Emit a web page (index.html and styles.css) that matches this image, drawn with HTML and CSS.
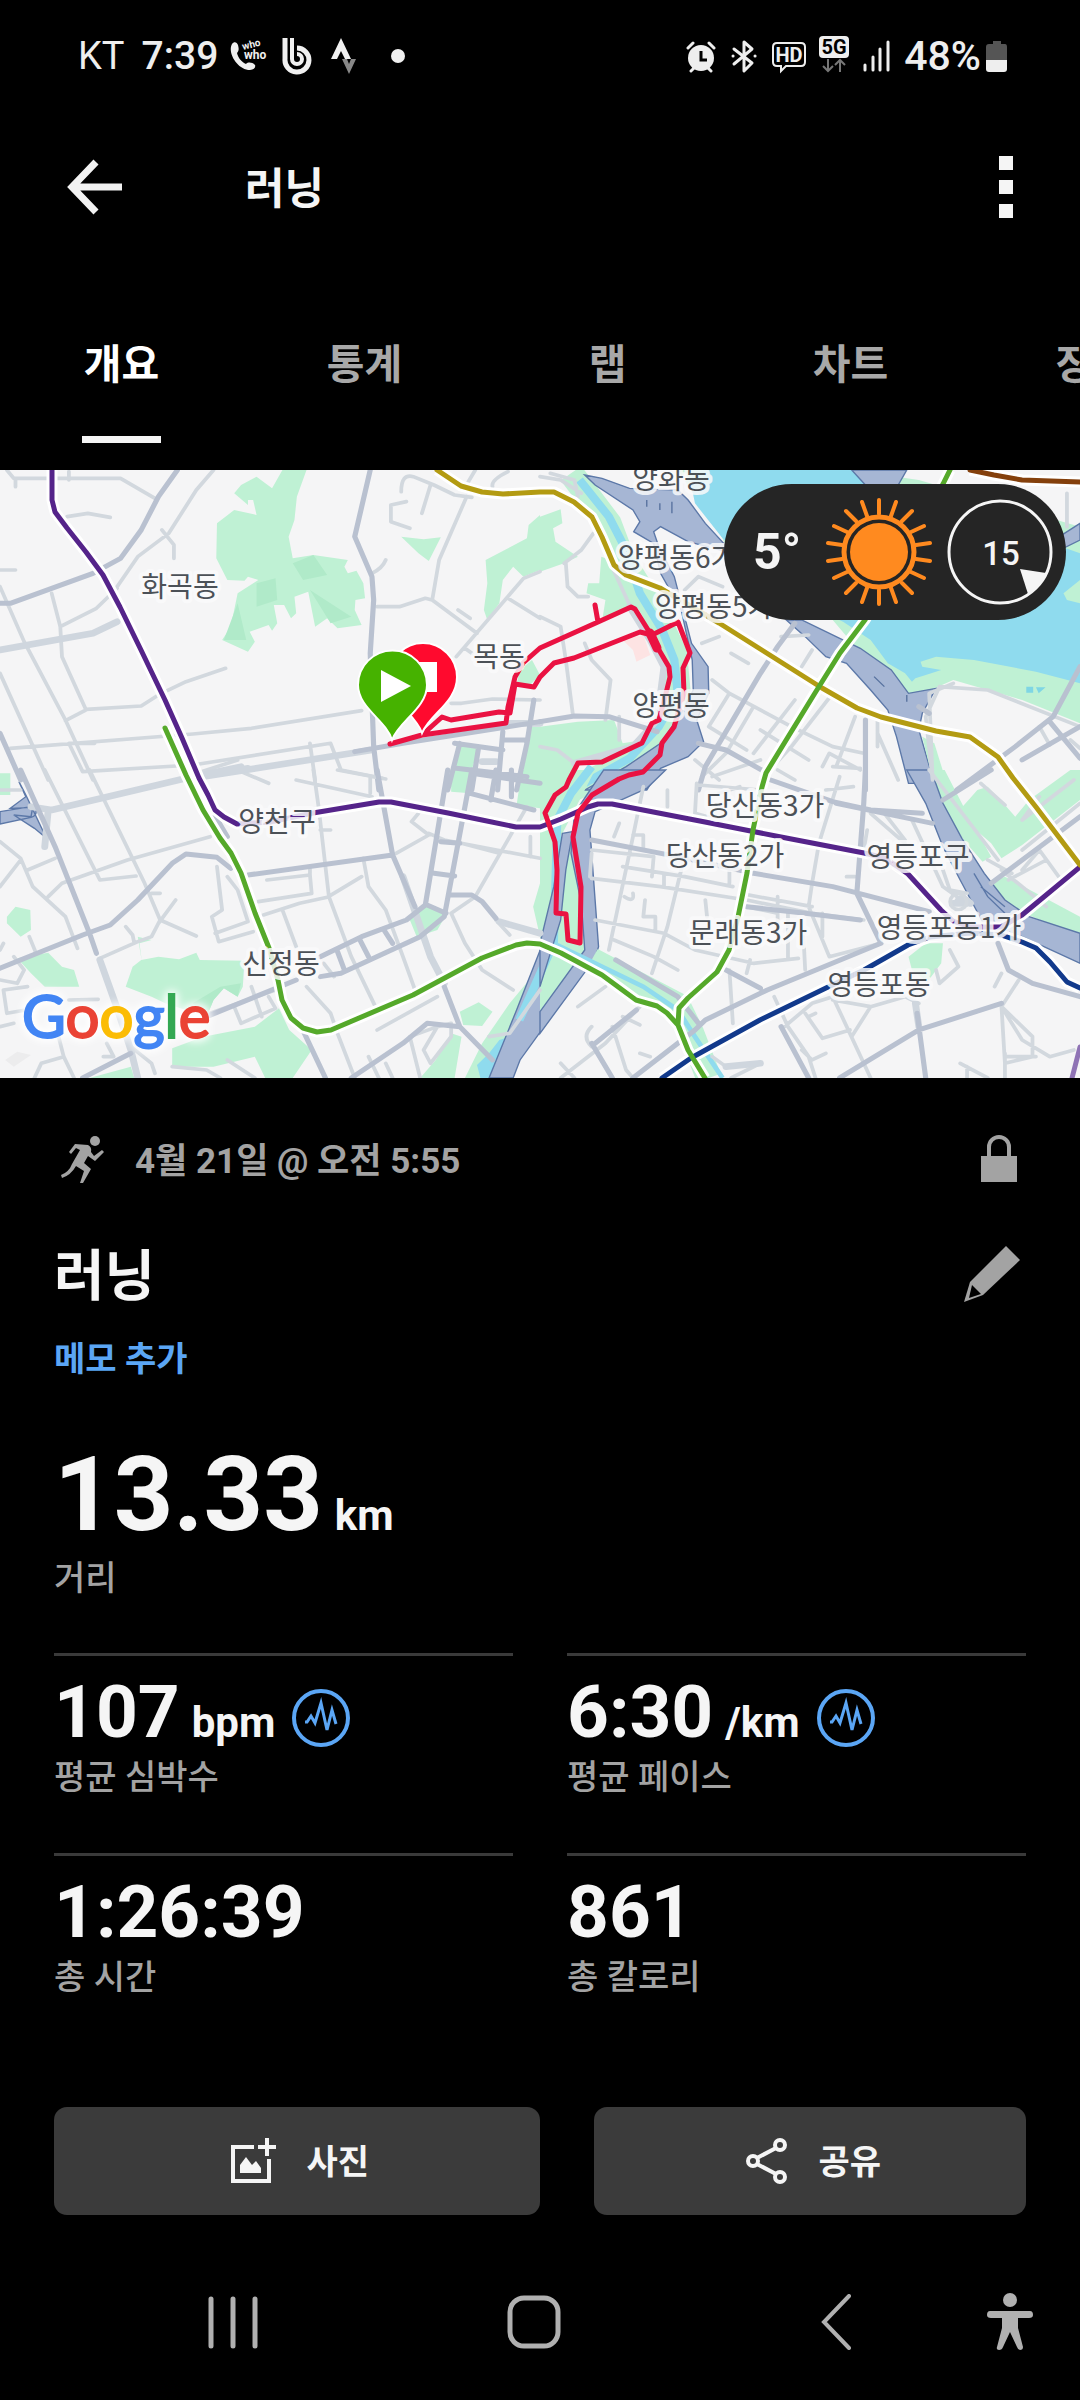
FILE: index.html
```html
<!DOCTYPE html>
<html lang="ko">
<head>
<meta charset="utf-8">
<meta name="viewport" content="width=device-width, initial-scale=1">
<title>러닝</title>
<link rel="stylesheet" href="styles.css">
</head>
<body>
<div class="status">
  <div class="status-group">
    <span class="carrier">KT</span>
    <span class="clock">7:39</span>
    <svg width="40" height="40" viewBox="0 0 40 40" fill="#f0f0f0"><path d="M2 8c2-3 5-2 6 1 1 4 1 6-1 8 1 5 5 9 9 11 2-2 6-2 9 1 1 2-1 5-5 5C8 34-3 17 2 8z"/><text x="13" y="14" font-size="10" class="tiny" transform="rotate(-14 13 14)">who</text><text x="14" y="23" font-size="12" class="tiny">who</text></svg>
    <svg width="30" height="40" viewBox="0 0 30 40" fill="none" stroke="#f0f0f0" stroke-width="5"><path d="M3 2v21a12 12 0 1 0 12-11"/><path d="M10 2v21a5 5 0 1 0 5-5" stroke-width="4"/></svg>
    <svg width="40" height="40" viewBox="0 0 40 40"><path d="M17 2 27 23h-6l-4-8-4 8H7z" fill="#f0f0f0"/><path d="M18 23h5l2 5 2-5h5l-7 15z" fill="#888"/></svg>
    <svg width="40" height="40" viewBox="0 0 40 40"><circle cx="22" cy="20" r="7" fill="#f0f0f0"/></svg>
  </div>
  <div class="status-group">
    <svg width="30" height="36" viewBox="0 0 30 36"><circle cx="15" cy="20" r="13" fill="#eee"/><path d="M2 10 7 5M28 10l-5-5M5 33l4-4M25 33l-4-4" stroke="#eee" stroke-width="3" stroke-linecap="round"/><path d="M15 13v9h6" fill="none" stroke="#000" stroke-width="3"/></svg>
    <svg width="32" height="36" viewBox="0 0 32 36" fill="none" stroke="#eee" stroke-width="3" stroke-linecap="round" stroke-linejoin="round"><path d="M6 11 24 25l-8 8V4l8 7L6 26M5 18h.1M27 18h.1"/></svg>
    <svg width="34" height="36" viewBox="0 0 34 36"><path d="M5 5h24q4 0 4 4v15q0 4-4 4H14l-5 5v-5H5q-4 0-4-4V9q0-4 4-4z" fill="none" stroke="#eee" stroke-width="2"/><text x="17" y="24" text-anchor="middle" font-size="20" class="tiny" fill="#eee">HD</text></svg>
    <svg width="32" height="40" viewBox="0 0 32 40"><rect x="1" y="0" width="30" height="22" rx="4" fill="#eee"/><text x="16" y="18" text-anchor="middle" font-size="20" class="tiny" fill="#000">5G</text><path d="M10 23v12m-5-5 5 5 5-5M22 36V24m-5 5 5-5 5 5" fill="none" stroke="#777" stroke-width="2"/></svg>
    <svg width="30" height="36" viewBox="0 0 30 36" stroke="#eee" stroke-width="3" stroke-linecap="round"><path d="M3 27v5M11 19v13M18 11v21M26 4v28"/></svg>
    <span class="battery"><span>48%</span>
    <svg width="22" height="32" viewBox="0 0 22 32"><path d="M7 1h8v3h4q2 0 2 3v13H0V7q0-3 3-3h4z" fill="#555"/><path d="M0 20h21v9q0 3-3 3H3q-3 0-3-3z" fill="#eee"/></svg></span>
  </div>
</div>

<header class="bar">
  <button class="icon-btn" aria-label="뒤로"><svg width="56" height="56" viewBox="0 0 56 56" fill="none" stroke="#f2f2f2" stroke-width="7"><path d="M29 3 5 28l24 25M5 28h50"/></svg></button>
  <h1 class="bar-title">러닝</h1>
  <button class="icon-btn" aria-label="더보기"><svg width="14" height="62" viewBox="0 0 14 62" fill="#f5f5f5"><path d="M0 0h14v14H0zM0 24h14v14H0zM0 48h14v14H0z"/></svg></button>
</header>

<nav class="tabs">
  <a class="tab is-active" href="#overview"><span>개요</span></a>
  <a class="tab" href="#stats"><span>통계</span></a>
  <a class="tab" href="#laps"><span>랩</span></a>
  <a class="tab" href="#charts"><span>차트</span></a>
  <a class="tab" href="#gear"><span>장비</span></a>
</nav>

<main>
<section class="map">
<svg class="map-art" viewBox="0 0 1080 608">
  <rect width="1080" height="608" fill="#f5f5f6"/>
  <!-- land and water, one group per map tile, each with the tile's own grid -->
  <g transform="translate(0 -10) scale(.3444 .3333)">
    <path class="park" d="M820 30 790 85 745 50 700 75 680 100 720 135 720 120 735 120 745 165 680 150 630 190 628 295 660 360 710 362 720 350 750 360 690 400 670 500 645 540 720 575 740 545 725 515 780 495 790 512 805 490 795 435 825 435 845 475 860 460 855 410 895 395 915 500 950 475 980 505 1050 495 1030 450 1032 420 1060 415 1055 370 1035 332 1010 340 1000 320 1010 300 910 285 850 295 838 230 855 180 862 110 890 30z"/>
    <path class="park" d="M1165 230 1230 238 1280 232 1245 303 1215 280z"/>
    <path class="park" d="M1568 165 1535 195 1530 235 1410 300 1415 370 1405 450 1415 480 1450 430 1460 360 1490 320 1520 350 1568 330z"/>
    <path class="park" d="M1325 850 1390 860 1370 930 1325 925zM1320 935 1370 945 1365 990 1310 980zM1535 800H1568V1000H1512z"/>
    <path class="park-dark" d="M745 370 800 355 805 420 745 440zM850 310 910 285 950 345 880 360zM690 430 715 540 650 540zM900 390 1020 470 960 490z"/>
  </g>
  <g transform="translate(540 -10) scale(.3444 .3333)">
    <path class="park" d="M400 30 900 30 1100 60 1568 200V790L1400 720 1200 660 1080 715 1010 690 940 590 850 480 600 400 530 235z"/>
    <path class="water" d="M430 30H905L1100 110 1568 280V670L1440 635 1260 600 1150 590 1105 605 1110 620 1165 630 1120 645 1090 655 1080 665 1060 640 1010 610 960 540 880 485 700 400 530 235 450 130z"/>
    <path class="park" d="M1520 400 1568 360V430L1530 420zM0 170 60 148 65 190 38 205 45 245 110 290 70 310 0 335zM178 290 205 300 235 360 330 450 250 440 180 485 190 420 135 400 140 370 172 370zM0 800 110 785 215 780 240 850 300 840 280 870 180 905 110 910 80 960 20 960 0 930z"/>
    <path class="bank" d="M90 40 200 190 240 300 330 450 390 580 400 690 370 790 280 900 90 990"/>
    <path class="brook" d="M115 60 200 170 245 260 290 400 355 510 390 600 400 700 345 800 260 895 130 970"/>
    <path class="freeway" d="M130 45 180 55 260 85 400 90 430 120 480 190 560 280 430 245 350 200 330 215 345 260 390 350 440 550 488 620 490 700 455 780 475 845 430 890 350 925 310 990H130L250 920 350 850 410 760 445 690 442 600 410 450 350 340 330 250 272 215 290 185 270 150 160 75z"/>
    <path class="freeway" d="M715 480 760 480 930 565 1020 630 1070 700 1150 685 1110 760 1100 810 1145 970H1070L1035 830 1010 750 960 690 890 610 830 590 770 530zM905 30H1065L1040 75H945zM1500 235 1568 190V240L1490 280z"/>
    <path d="M240 540 300 525 320 585 280 605 270 570z" fill="#fde3e3"/>
    <path class="park" d="M1110 830 1145 850 1190 1000H1150z"/>
    <path d="M310 120v20M348 130v20M383 125v35M970 650l30 30M1065 705v20" stroke="#58729f" stroke-width="4"/>
    <path d="M1412 680h20v18h-20zM1440 682h28l-20 18z" fill="#7fd6e4"/>
  </g>
  <g transform="translate(0 300) scale(.3444 .3333)">
    <path class="park" d="M0 10H30V75H0zM20 440 45 410 88 420 90 480 60 500 20 460zM50 565 140 548 180 590 215 600 230 650 130 650 90 610zM410 570 460 560 520 568 570 548 580 570 710 572 705 650 690 680 650 655 620 690 600 740 540 720 480 700 440 680 365 650 385 590zM400 500 440 510 405 520 412 575zM500 835 590 800 740 770 810 715 840 780 905 840 850 924H770L740 860 620 890 500 890zM1190 450 1240 405 1295 435 1270 480 1210 500zM1335 725 1390 697 1430 725 1400 768 1345 765zM1568 590 1480 700 1400 820 1350 924H1440L1568 620zM1310 790 1340 800 1320 924H1220L1265 870zM260 924 380 890 390 924zM1568 340 1548 410 1568 500zM1310 0H1375L1365 70 1310 65zM1515 0H1568V115L1500 105z"/>
    <path class="water" d="M1450 810 1420 850 1385 885 1395 924H1430L1480 800z"/>
    <path class="freeway" d="M1580 510 1500 720 1420 924H1490L1510 870 1580 770zM0 125 90 110Q105 112 105 125T90 142L0 162zM55 35 75 75 135 205 100 175 40 135 90 140 95 112 30 115 75 80z"/>
    <path class="park-dark" d="M560 700 640 650 700 640 690 680 650 655 620 690 600 740z"/>
    <path d="M15 870 50 845 90 855 40 890z" fill="#ececed"/>
  </g>
  <g transform="translate(540 300) scale(.3444 .3333)">
    <path class="park" d="M0 0H160L60 200 140 230 150 560 0 760z"/>
    <path class="brook" d="M150 -10 90 70 50 150 40 520 -60 750"/>
    <path class="freeway" d="M185 0H365L310 55 160 125 145 180 170 530 160 565 0 790V725L130 540 120 400 90 250 100 130zM65 190 95 185 75 300 60 450 0 650V520L40 350z"/>
    <path class="bank" d="M150 570 280 640 400 705 440 790 490 924"/>
    <path class="brook narrow" d="M50 525 160 580 300 650 400 720 450 800 530 924"/>
    <path class="park" d="M1140 0 1175 0 1230 110 1310 260 1285 275 1230 210 1160 90zM1270 60 1300 50 1350 105 1380 140 1420 90 1540 0H1568V90L1400 225 1340 265 1310 220 1210 130zM1310 335 1350 320 1568 440V500L1430 440 1360 410zM1070 560 1120 520 1170 520 1165 580 1125 635 1080 600z"/>
    <path class="freeway" d="M1065 0H1135L1170 100 1225 205 1290 310 1350 390 1420 440 1568 490V580L1400 500 1290 465 1220 330 1170 230 1120 100z"/>
    <path d="M1260 310 1300 380 1350 430M1280 350 1350 410" class="edge"/>
  </g>

  <!-- streets, on the same tile grids -->
  <g transform="translate(0 -10) scale(.3444 .3333)">
    <path class="road" d="M20 30 40 55H350L450 115M45 55V80M200 35V60M195 170 255 160 320 172M620 30 570 90 490 220 400 290 340 380M470 210 505 255V295M0 330H45M0 380 70 545 190 780 270 960M150 400 175 500 180 590 250 750 190 782M175 500 280 445 340 385M250 748 410 738 460 705 540 665 655 625M0 640 140 960M30 865 560 822 730 805 1050 752M200 850 240 935 560 915 960 850 990 930 1110 955M200 850 275 850M900 850 915 960M1080 340Q1110 325 1120 300M1095 440 1160 440 1235 415 1255 420 1385 520M1255 420 1275 300 1355 110M1165 95Q1165 40 1200 50L1260 75 1320 105 1370 112M1250 75 1225 160M1180 125 1135 135V185L1190 205M1430 80Q1425 60 1475 35M1330 450 1365 475M1325 590 1520 355 1568 335M1475 415 1568 475M1310 730H1340L1430 717 1568 720M1350 565 1370 580M1380 30 1360 65M560 940 700 935 780 970"/>
    <path class="road wide" d="M0 570 270 520 340 485M560 955 1080 870M1400 905H1440M1470 790H1568"/>
    <path class="road main" d="M0 430H30L270 340 350 295 410 210 460 110 515 30M1075 30 1030 230 1080 350 1085 420 1075 580 1085 860 1100 990M0 820 60 960M1030 875 1170 850 1568 785M1320 850 1460 870M1460 815 1445 990M1335 850 1300 990M1390 860 1370 990M1550 720 1530 850 1500 990M1460 840H1530M1325 925 1530 950"/>
  </g>
  <g transform="translate(540 -10) scale(.3444 .3333)">
    <path class="road" d="M0 50 60 60 120 100M0 470 60 500 75 600 95 760M130 550 150 600 205 660 190 780M75 310 80 380 110 410 140 410M155 220 120 270 70 310M200 300 260 435M500 660 550 700 730 800 850 860 940 880M550 700 490 800 600 870M620 740 540 880 470 950M740 720 620 880M850 700 730 860 640 960M915 770 860 920M820 920 840 880 930 930M980 780V860M980 820 1040 960M555 580 605 610M470 550 520 530M420 390 460 350 530 380M500 950 640 900M850 920 930 925M640 810 780 900M0 860 50 870 100 910M230 770V840M790 570 760 620M700 530 780 525M1140 960 1120 770 1160 680 1300 690 1568 800M1140 960 1130 700 1200 670M1450 800 1480 855M1540 840 1568 865M1530 100V200M30 40 100 60 110 110M450 900 520 960"/>
    <path class="road wide" d="M260 440 320 540 360 620 340 780 270 860 100 910"/>
    <path class="road main" d="M740 490 690 560 640 640 560 780 480 920 460 990M0 785 100 768 200 770 340 815M460 850 540 870 660 940M945 780V990M1568 620 1490 770 1380 860 1210 990M1480 785 1568 895M1568 800 1400 900M1100 740 1130 760"/>
  </g>
  <g transform="translate(0 300) scale(.3444 .3333)">
    <path class="road" d="M130 0 290 330 395 318M260 0 420 340 465 450 440 500 400 515 290 565M140 380 180 340 370 270 610 200M0 215 60 265 95 350 190 440 225 535M0 350 60 270M80 300 160 265M465 450 570 498M440 370 465 370M510 390 460 460M365 470 385 495 390 520M630 290 645 420 615 440 635 515 735 485M660 320 690 360 720 455 625 490M775 330 900 315 905 370 750 395M900 290V320M765 435 870 400 950 382 1050 320M910 0 925 110 955 380 1020 560 1090 710M930 180H960M1055 265 1070 350 1120 420 1170 560 1205 660M820 420 860 530M940 580 970 620M980 0 1120 27M1075 20V70M860 30 1080 80M1150 250 1245 195 1195 155 1215 130M1245 190 1290 210 1568 265M1310 430 1350 520 1400 600 1490 660M1310 430 1380 380 1430 290 1530 110M1440 450 1480 495M1340 220 1450 250M1540 200V260M0 630 50 640 70 600 40 560M10 660 20 730 75 720M10 660 80 650M200 690 285 688M0 770 40 760M170 800 185 860 120 880 100 924M185 860 215 924M310 820 330 860 300 860M380 830 440 880 450 910M610 730 800 660M680 710 700 760 800 715 780 680M730 650 760 740M890 650 960 730 980 790 1030 924M660 870 740 924M500 890 600 900 640 924M1070 860 1100 924M1120 880 1140 924M1095 780 1270 680M1220 924 1190 800 1270 770 1310 760 1310 800 1250 880 1230 840 1270 770M1568 660 1480 790 1420 800M0 540 10 520M85 500 105 550M540 20 690 -30M0 60 60 60"/>
    <path class="road wide" d="M90 110 150 120 540 25 700 -10M140 120 130 230M290 570 335 700 380 840 400 924M1170 320 1250 560 1290 640M1450 455 1568 490M720 -5 640 10"/>
    <path class="road main" d="M60 0 160 230 260 490 280 550M0 595 240 495 320 465 400 390 500 280 540 252 630 262 670 295M720 315 1140 255M1095 0 1140 255 1205 410M930 560 1050 500 1180 450 1235 405 1300 0M930 620 990 610 1220 500 1290 440 1370 0M1240 405 1295 430M1260 310 1320 318M1280 215 1335 220M1365 70 1550 120M1290 650 1335 770 1430 870M1335 770 1240 760 1170 820 1020 924M380 850 240 924M870 760 945 924M600 740 860 630M980 545 1000 600M1045 510 1070 560M1115 480 1140 520M1310 375H1370L1400 395 1440 445M1370 10 1568 40M1440 0 1425 90M1485 0V80M620 130 660 200"/>
  </g>
  <g transform="translate(540 300) scale(.3444 .3333)">
    <path class="road" d="M300 50 270 200 200 540M370 60V110M230 160 215 200M270 195H300V235M150 240 330 260 325 320M150 325 350 350 600 390 790 430 940 450M410 300 370 470 325 610M240 290 420 320 560 350M360 350V310M480 390 485 440M550 300V340M160 450 360 490 450 540 620 580 750 565M215 510 330 560 400 600M245 380Q275 400 270 370M305 390 300 440H335V480M455 40 450 130 520 150M460 45 640 60M870 20 810 220 790 340 780 410 840 560 990 520M690 380V500M600 410 690 430M580 370 790 410M720 430V560M765 500 770 600M820 430V500M950 180 940 240M890 320H915M610 570 600 610M110 710 190 650M60 924 190 820 290 710M150 830Q120 800 150 770M150 820 210 924M210 770 250 900 270 924M240 740 290 765M60 880 100 924M290 850 320 860M550 600 560 760M680 680 720 770 780 860 800 924M710 770 790 700 850 680 960 924M770 730 820 805 900 780M850 690 960 710 905 800M960 710 1060 680 1100 700M760 840 790 870 830 850M780 740 800 730M1130 0 1330 270M960 130 1060 220M1000 130 1060 210M1080 150 1170 350 1210 380M1170 300 1190 360 1240 370M1190 540 1215 590 1160 640 1150 600M1390 630 1340 710 1350 880 1430 860 1430 800 1340 710M1350 860H1440M1340 710 1400 810 1480 860 1550 840M1350 850V924M1320 650 1340 610M1220 880 1300 924M1240 890 1240 924M1340 300 1400 350 1470 410M1360 330 1470 270M1400 300 1450 240 1520 340M1450 80 1400 150M1568 100 1400 240M1550 30 1400 150M1350 105 1280 40M1300 270 1370 310M540 890 500 860M150 250 145 320M720 570V540M555 924 640 880M520 70 580 50M690 0 740 30M830 60 910 50"/>
    <path class="road wide" d="M540 890 640 880M1200 400H1240M1090 700 1100 770M1210 400Q1220 370 1250 400"/>
    <path class="road main" d="M150 210 400 260 620 310 850 350 1130 425M600 410 770 430 930 450M670 30 850 95 960 120 1110 130M945 0 940 100 920 370 990 520M990 520 660 660 480 750 450 780 270 924M540 600 640 655M700 770 780 924M870 924 1100 780 1340 700M1095 730 1120 924M1330 520 1360 600 1430 640 1568 680M1310 340 1568 140M1170 90 1310 0M150 820 210 924M160 820 280 720M220 570 400 680 460 760M860 100 1140 160"/>
    <circle cx="1215" cy="395" r="24" class="road"/>
  </g>

  <!-- subway lines: white casing, then colours -->
  <path class="rail" d="M52 0V30L55 42 67 58 86 82 103 105 120 137 141 180 165 230 182 268 199 308 208 325 215 340 224 347 237 354 270 352 313 343 379 332H391L448 343 482 350 516 357H540L561 349 588 337 598 334H612L705 352 781 367 864 383 885 388 908 404 941 440 953 451 970 457H1001L1022 445 1080 397M437 0 461 16 482 22 503 24 540 22H554L574 32 592 47 602 67 614 95 626 105 660 118 719 153 822 218 857 238 881 247 936 261 970 267 998 287 1013 308 1036 337 1080 395M165 258 186 305 203 340 220 368 231 383 241 403 255 443 269 478 278 510 282 530 291 548 303 558 317 562 331 560 413 525 482 488 516 475 527 473 540 474 561 483 602 505 636 530 657 536 667 543 678 555 688 580 705 608M950 0 943 14 865 150 840 183 815 223 788 267 766 303 762 317 753 360 747 403 738 447 729 480 717 502 688 528 679 538 678 555M970 0 994 5 1022 10 1080 12M662 608 691 588 760 550 826 518 864 500 908 475 930 467 970 463 1001 465 1022 472 1036 478 1050 492 1067 512 1080 518"/>
  <g class="lines">
    <path class="c5" d="M52 0V30L55 42 67 58 86 82 103 105 120 137 141 180 165 230 182 268 199 308 208 325 215 340 224 347 237 354 270 352 313 343 379 332H391L448 343 482 350 516 357H540L561 349 588 337 598 334H612L705 352 781 367 864 383 885 388 908 404 941 440 953 451 970 457H1001L1022 445 1080 397"/>
    <path class="c3" d="M437 0 461 16 482 22 503 24 540 22H554L574 32 592 47 602 67 614 95 626 105 660 118 719 153 822 218 857 238 881 247 936 261 970 267 998 287 1013 308 1036 337 1080 395"/>
    <path class="c1" d="M662 608 691 588 760 550 826 518 864 500 908 475 930 467 970 463 1001 465 1022 472 1036 478 1050 492 1067 512 1080 518"/>
    <path class="c2" d="M165 258 186 305 203 340 220 368 231 383 241 403 255 443 269 478 278 510 282 530 291 548 303 558 317 562 331 560 413 525 482 488 516 475 527 473 540 474 561 483 602 505 636 530 657 536 667 543 678 555 688 580 705 608M950 0 943 14 865 150 840 183 815 223 788 267 766 303 762 317 753 360 747 403 738 447 729 480 717 502 688 528 679 538 678 555"/>
    <path class="c4" d="M970 0 994 5 1022 10 1080 12"/>
    <path class="c6" d="M1080 577 1072 608"/>
  </g>

  <path class="park" d="M520 200 532 190 540 205 530 215 517 213z"/>
  <path class="route" d="M390 274 422 265 506 253 508 237 515 207 523 193 540 178 598 152 595 135 598 152 631 137 635 139 650 163 659 180 669 197 670 207 666 223 659 250 652 253 642 273 602 292 578 293 569 310 566 317 555 325 545 343 555 372 557 400 556 443 566 444 568 470 580 473 581 417 573 367 578 343 592 325 619 309 629 305 643 302 660 285 662 273 674 257 684 223 683 198 690 183 678 152 652 165 640 162 574 188 554 193 540 207 534 217 515 214 510 243 499 242 451 250 442 247 422 265"/>
  <path class="route thick" d="M650 163 657 178"/>

  <g class="labels" text-anchor="middle">
    <text x="180" y="127">화곡동</text><text x="499" y="197">목동</text><text x="277" y="362">양천구</text><text x="281" y="504">신정동</text>
    <text x="671" y="19">양화동</text><text x="677" y="98">양평동6가</text><text x="714" y="147">양평동5가</text><text x="671" y="246">양평동</text>
    <text x="765" y="346">당산동3가</text><text x="725" y="396">당산동2가</text><text x="918" y="397">영등포구</text><text x="949" y="468">영등포동1가</text>
    <text x="748" y="473">문래동3가</text><text x="879" y="525">영등포동</text>
  </g>
  <g stroke="#fff" stroke-width="2">
    <path d="M422 263C416 244 389 232 389 207a34 34 0 1 1 68 0c0 25-27 37-35 56z" fill="#ff0a2e"/>
    <path d="M410 193h26v28h-26z" fill="#fff"/>
    <path d="M392 270C386 250 358 238 358 215a34 34 0 1 1 69 0c0 23-28 36-35 55z" fill="#46b200"/>
    <path d="M381 200v32l30-16z" fill="#fff" stroke="none"/>
  </g>
  <g class="logo"><text x="22" y="568"><tspan class="blue">G</tspan><tspan class="red">o</tspan><tspan class="yellow">o</tspan><tspan class="blue">g</tspan><tspan class="green">l</tspan><tspan class="red">e</tspan></text></g>
</svg>
<div class="weather">
  <span class="temp">5°</span>
  <svg width="106" height="110" viewBox="-53 -55 106 110" fill="none" stroke="#ff8a1f">
    <circle r="29" fill="#ff8a1f" stroke="none"/><circle r="35" stroke-width="5"/>
    <path stroke-width="4" stroke-linecap="round" d="M0-38V-52M0 38V52M12-36 17-50M12 36 17 50M-12-36-17-50M-12 36-17 50M23-31 33-41M23 31 33 41M-23-31-33-41M-23 31-33 41M32-20 45-26M32 20 45 26M-32-20-45-26M-32 20-45 26M37-7 51-9M37 7 51 9M-37-7-51-9M-37 7-51 9"/>
  </svg>
  <svg width="106" height="110" viewBox="-53 -55 106 110"><circle r="51" fill="none" stroke="#f5f5f5" stroke-width="3"/><path d="M20 17 46 21A52 52 0 0 1 28 42z" fill="#f5f5f5"/><text x="1" y="13" text-anchor="middle" class="wind">15</text></svg>
</div>
</section>

<section class="details">
  <div class="meta">
    <svg width="46" height="48" viewBox="0 0 46 48" fill="#a3a3a3"><circle cx="35" cy="6" r="5"/><path d="M15 9 28 10Q32 12 31 17L34 21 42 15 44 17 35 26 28 21 24 28 31 34 23 48H20L24 36 16 31Q11 40 2 43L1 40Q9 37 12 29L20 15 16 13 11 19 9 17z"/></svg>
    <span class="date">4월 21일 @ 오전 5:55</span>
    <svg width="36" height="48" viewBox="0 0 36 48"><path d="M8 22V12a10 10 0 0 1 20 0v10" fill="none" stroke="#a3a3a3" stroke-width="4"/><path d="M0 21h36v26H0z" fill="#a3a3a3"/></svg>
  </div>
  <div class="title-row">
    <h2>러닝</h2>
    <button class="icon-btn" aria-label="편집"><svg width="58" height="58" viewBox="0 0 58 58"><path d="M43 1 57 15 20 50 1 57 7 37z" fill="#a3a3a3"/><path d="M9 40 18 49 6 53z" fill="#000"/></svg></button>
  </div>
  <a class="memo" href="#memo">메모 추가</a>

  <div class="value hero"><span class="num">13.33</span><span class="unit">km</span></div>
  <div class="caption">거리</div>

  <div class="stats">
    <div class="stat">
      <div class="value"><span class="num">107</span><span class="unit">bpm</span><button class="icon-btn chart" aria-label="심박수 차트"><svg width="58" height="58" viewBox="0 0 58 58" fill="none" stroke="#5ba6f5"><circle cx="29" cy="29" r="27" stroke-width="4"/><path d="M13 33h2l4-6 4 7 6-20 6 27 5-20 4 14" stroke-width="3"/></svg></button></div>
      <div class="caption">평균 심박수</div>
    </div>
    <div class="stat">
      <div class="value"><span class="num">6:30</span><span class="unit">/km</span><button class="icon-btn chart" aria-label="페이스 차트"><svg width="58" height="58" viewBox="0 0 58 58" fill="none" stroke="#5ba6f5"><circle cx="29" cy="29" r="27" stroke-width="4"/><path d="M13 33h2l4-6 4 7 6-20 6 27 5-20 4 14" stroke-width="3"/></svg></button></div>
      <div class="caption">평균 페이스</div>
    </div>
    <div class="stat">
      <div class="value"><span class="num">1:26:39</span></div>
      <div class="caption">총 시간</div>
    </div>
    <div class="stat">
      <div class="value"><span class="num">861</span></div>
      <div class="caption">총 칼로리</div>
    </div>
  </div>

  <div class="actions">
    <button class="action photo"><svg width="46" height="48" viewBox="0 0 46 48" fill="none" stroke="#f5f5f5"><path d="M23 10H2v34h36V22" stroke-width="4"/><path d="M36 1v18M27 10h18" stroke-width="4"/><path d="M9 36V28l6-8 6 8 4-4 5 7v5z" fill="#f5f5f5" stroke="none"/></svg><span>사진</span></button>
    <button class="action share"><svg width="44" height="48" viewBox="0 0 44 48" fill="none" stroke="#f5f5f5" stroke-width="4"><circle cx="8" cy="24" r="5"/><circle cx="35" cy="8" r="5"/><circle cx="35" cy="40" r="5"/><path d="M12 21 31 11M12 27l19 10"/></svg><span>공유</span></button>
  </div>
</section>
</main>

<nav class="sysnav">
  <button class="icon-btn" aria-label="최근 앱"><svg width="50" height="54" viewBox="0 0 50 54" stroke="#b0b0b0" stroke-width="5" stroke-linecap="round"><path d="M3 4v47M25 4v47M47 4v47"/></svg></button>
  <button class="icon-btn" aria-label="홈"><svg width="54" height="54" viewBox="0 0 54 54"><rect x="3" y="3" width="48" height="48" rx="14" fill="none" stroke="#b0b0b0" stroke-width="5"/></svg></button>
  <button class="icon-btn" aria-label="뒤로 가기"><svg width="30" height="56" viewBox="0 0 30 56" fill="none" stroke="#b0b0b0" stroke-width="4" stroke-linecap="round"><path d="M28 2 3 28l25 26"/></svg></button>
  <button class="icon-btn" aria-label="접근성"><svg width="46" height="58" viewBox="0 0 46 58" fill="#b0b0b0"><circle cx="23" cy="7" r="7"/><path d="M3 18H43Q46 18 46 22 46 25 42 25H31V35L36 54Q36 57 33 57 31 57 30 54L23 39 16 54Q15 57 12 57 9 57 10 54L15 35V25H4Q0 25 0 22 0 18 3 18z"/></svg></button>
</nav>
</body>
</html>
```
FILE: styles.css
```css
* { box-sizing: border-box; }
body {
  margin: 0;
  background: #000;
  color: #f5f5f5;
  font-family: Roboto, "Noto Sans CJK KR", sans-serif;
  overflow-x: hidden;
}
svg { display: block; flex: none; }
button { font: inherit; color: inherit; border: 0; padding: 0; background: none; }
a { text-decoration: none; color: inherit; }
h1, h2 { margin: 0; font-weight: 700; }
.icon-btn { display: grid; place-items: center; }

.status { display: flex; justify-content: space-between; align-items: center; height: 112px; padding: 0 72px 0 78px; color: #eee; }
.status-group { display: flex; align-items: center; gap: 12px; }
.carrier { margin-right: 5px; font-size: 38px; }
.clock { font-size: 39px; font-weight: 500; }
.battery { display: flex; align-items: center; gap: 5px; font-size: 41px; font-weight: 500; }
.tiny { font-family: Roboto, sans-serif; font-weight: 700; }

.bar { display: flex; align-items: center; height: 150px; padding: 0 67px; }
.bar-title { flex: 1; margin-left: 122px; padding-bottom: 4px; font-size: 43px; }

.tabs { display: flex; height: 208px; padding-top: 73px; overflow: hidden; }
.tab { flex: 0 0 243px; text-align: center; font-size: 41px; line-height: 60px; font-weight: 700; color: #a8a8a8; }
.tab span { display: inline-block; height: 108px; padding: 0 2px; }
.tab.is-active { color: #fff; }
.tab.is-active span { border-bottom: 7px solid #f5f5f5; }

.map { position: relative; overflow: hidden; }
.map-art { width: 100%; height: auto; }
.park { fill: #bff1d4; }
.park-dark { fill: #b0eac9; }
.water { fill: #8fdbee; }
.brook { fill: none; stroke: #8fdbee; stroke-width: 24px; }
.brook.narrow { stroke-width: 14px; }
.bank { fill: none; stroke: #bff1d4; stroke-width: 74px; }
.freeway { fill: #a6b6d4; stroke: #5c78a8; stroke-width: 4px; }
.edge { fill: none; stroke: #5c78a8; stroke-width: 4px; }
.road { fill: none; stroke: #d2d8de; stroke-width: 11px; stroke-linejoin: round; stroke-linecap: round; }
.road.wide { stroke: #cfd6de; stroke-width: 20px; }
.road.main { stroke: #b9c1d0; stroke-width: 15px; }
.rail { fill: none; stroke: #fff; stroke-width: 11px; stroke-linejoin: round; }
.lines { fill: none; stroke-width: 5px; stroke-linejoin: round; stroke-linecap: round; }
.c1 { stroke: #123a8c; }
.c2 { stroke: #55a92a; }
.c3 { stroke: #b39b12; }
.c4 { stroke: #84400c; }
.c5 { stroke: #55248a; }
.c6 { stroke: #8f73b5; }
.route { fill: none; stroke: #ea1242; stroke-width: 5px; stroke-linejoin: round; stroke-linecap: round; }
.route.thick { stroke-width: 9px; }
.labels { font-family: "Noto Sans CJK KR", sans-serif; font-size: 28px; fill: #4c5157; stroke: rgba(250, 250, 251, .85); stroke-width: 8px; stroke-linejoin: round; paint-order: stroke; }
.logo { font-family: Lato, sans-serif; font-size: 60px; stroke-width: 2px; filter: drop-shadow(0 0 4px #fff) drop-shadow(0 0 4px #fff); }
.blue { fill: #4285f4; stroke: #4285f4; }
.red { fill: #ea4335; stroke: #ea4335; }
.yellow { fill: #fbbc05; stroke: #fbbc05; }
.green { fill: #34a853; stroke: #34a853; }

.weather { position: absolute; top: 14px; right: 14px; display: flex; align-items: center; height: 136px; padding: 0 13px 0 29px; border-radius: 68px; background: #252525; }
.temp { width: 73px; font-size: 50px; font-weight: 700; }
.weather svg + svg { margin-left: 15px; }
.wind { font-size: 33px; font-weight: 500; fill: #f5f5f5; }

.details { padding: 54px 54px 0; }
.meta { display: flex; align-items: center; height: 54px; color: #a3a3a3; padding: 0 9px 0 6px; }
.date { flex: 1; margin-left: 29px; padding-bottom: 4px; font-size: 35px; font-weight: 700; }
.title-row { display: flex; justify-content: space-between; align-items: center; height: 80px; margin-top: 48px; padding-right: 5px; }
.title-row h2 { padding-bottom: 6px; font-size: 55px; }
.memo { display: inline-block; margin-top: 20px; font-size: 34px; line-height: 50px; font-weight: 700; color: #5ba6f5; }

.value { display: flex; align-items: baseline; height: 80px; font-weight: 700; }
.num { font-size: 73px; line-height: 82px; }
.unit { margin-left: 12px; font-size: 42px; }
.chart { align-self: flex-end; margin: 0 0 4px 17px; }
.caption { padding-top: 2px; font-size: 34px; line-height: 48px; font-weight: 500; color: #a3a3a3; }
.hero { height: 110px; margin-top: 54px; margin-bottom: 4px; }
.hero .num { font-size: 104px; line-height: 114px; }

.stats { display: grid; grid-template-columns: 1fr 1fr; column-gap: 54px; margin-top: 51px; }
.stat { height: 200px; padding-top: 15px; border-top: 3px solid #3a3a3a; }

.actions { display: flex; gap: 54px; margin-top: 54px; }
.action { display: flex; justify-content: center; align-items: center; gap: 30px; height: 108px; padding-left: 6px; border-radius: 13px; background: #3b3b3b; font-size: 34px; font-weight: 700; }
.action span { padding-bottom: 3px; }
.photo { flex: 9 1 0; }
.share { flex: 8 1 0; }

.sysnav { display: grid; grid-template-columns: 1fr 1fr 1fr 46px; align-items: center; height: 150px; margin-top: 32px; padding: 0 47px 0 82px; }
```
